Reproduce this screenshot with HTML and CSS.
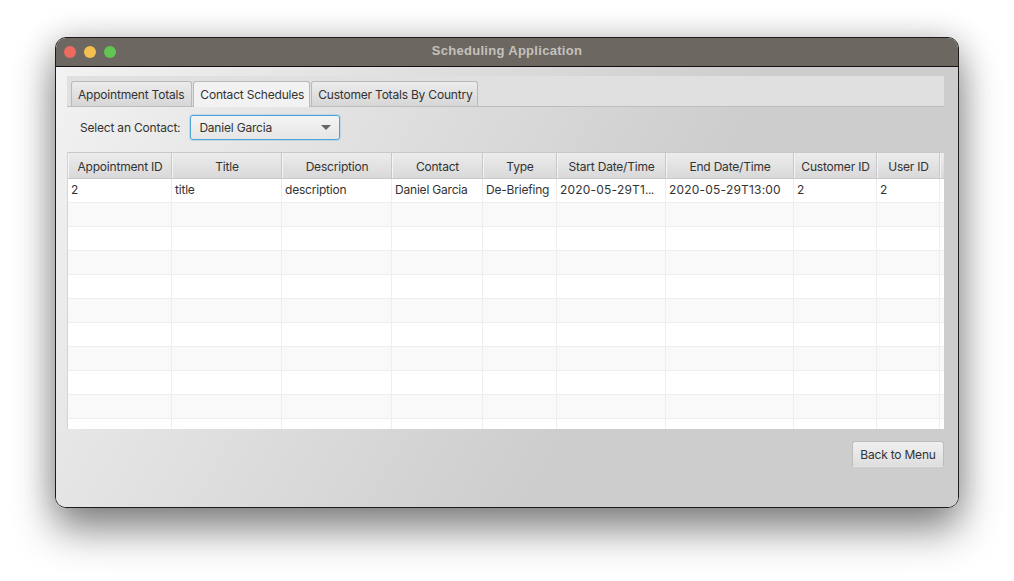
FILE: index.html
```html
<!DOCTYPE html>
<html>
<head>
  <title>Scheduling Application</title>
  <link rel="stylesheet" href="styles.css">
</head>
<body>

<div class="window">
  <div class="titlebar">
    <div class="lights">
      <span class="light red"></span>
      <span class="light yellow"></span>
      <span class="light green"></span>
    </div>
    <div class="window-title">Scheduling Application</div>
  </div>

  <div class="content">
    <div class="tabs">
      <div class="tab">Appointment Totals</div>
      <div class="tab active">Contact Schedules</div>
      <div class="tab">Customer Totals By Country</div>
    </div>

    <div class="filter">
      <label class="filter-label">Select an Contact:</label>
      <div class="select">
        <span>Daniel Garcia</span>
        <span class="arrow"></span>
      </div>
    </div>

    <div class="table">
      <div class="row head">
        <div class="cell">Appointment ID</div>
        <div class="cell">Title</div>
        <div class="cell">Description</div>
        <div class="cell">Contact</div>
        <div class="cell">Type</div>
        <div class="cell">Start Date/Time</div>
        <div class="cell">End Date/Time</div>
        <div class="cell">Customer ID</div>
        <div class="cell">User ID</div>
        <div class="cell"></div>
      </div>
      <div class="row">
        <div class="cell">2</div>
        <div class="cell">title</div>
        <div class="cell">description</div>
        <div class="cell">Daniel Garcia</div>
        <div class="cell">De-Briefing</div>
        <div class="cell date">2020-05-29T1<span class="dots">...</span></div>
        <div class="cell date">2020-05-29T13:00</div>
        <div class="cell">2</div>
        <div class="cell">2</div>
        <div class="cell"></div>
      </div>
      <div class="row"><div class="cell"></div><div class="cell"></div><div class="cell"></div><div class="cell"></div><div class="cell"></div><div class="cell"></div><div class="cell"></div><div class="cell"></div><div class="cell"></div><div class="cell"></div></div>
      <div class="row"><div class="cell"></div><div class="cell"></div><div class="cell"></div><div class="cell"></div><div class="cell"></div><div class="cell"></div><div class="cell"></div><div class="cell"></div><div class="cell"></div><div class="cell"></div></div>
      <div class="row"><div class="cell"></div><div class="cell"></div><div class="cell"></div><div class="cell"></div><div class="cell"></div><div class="cell"></div><div class="cell"></div><div class="cell"></div><div class="cell"></div><div class="cell"></div></div>
      <div class="row"><div class="cell"></div><div class="cell"></div><div class="cell"></div><div class="cell"></div><div class="cell"></div><div class="cell"></div><div class="cell"></div><div class="cell"></div><div class="cell"></div><div class="cell"></div></div>
      <div class="row"><div class="cell"></div><div class="cell"></div><div class="cell"></div><div class="cell"></div><div class="cell"></div><div class="cell"></div><div class="cell"></div><div class="cell"></div><div class="cell"></div><div class="cell"></div></div>
      <div class="row"><div class="cell"></div><div class="cell"></div><div class="cell"></div><div class="cell"></div><div class="cell"></div><div class="cell"></div><div class="cell"></div><div class="cell"></div><div class="cell"></div><div class="cell"></div></div>
      <div class="row"><div class="cell"></div><div class="cell"></div><div class="cell"></div><div class="cell"></div><div class="cell"></div><div class="cell"></div><div class="cell"></div><div class="cell"></div><div class="cell"></div><div class="cell"></div></div>
      <div class="row"><div class="cell"></div><div class="cell"></div><div class="cell"></div><div class="cell"></div><div class="cell"></div><div class="cell"></div><div class="cell"></div><div class="cell"></div><div class="cell"></div><div class="cell"></div></div>
      <div class="row"><div class="cell"></div><div class="cell"></div><div class="cell"></div><div class="cell"></div><div class="cell"></div><div class="cell"></div><div class="cell"></div><div class="cell"></div><div class="cell"></div><div class="cell"></div></div>
      <div class="row"><div class="cell"></div><div class="cell"></div><div class="cell"></div><div class="cell"></div><div class="cell"></div><div class="cell"></div><div class="cell"></div><div class="cell"></div><div class="cell"></div><div class="cell"></div></div>
    </div>

    <div class="actions">
      <button class="btn">Back to Menu</button>
    </div>
  </div>
</div>

</body>
</html>
```

FILE: styles.css
```css
html, body {
  height: 100%;
}
body {
  margin: 0;
  padding: 37px 0 0 55px;
  box-sizing: border-box;
  background: #fff;
  font-family: 'Inter', 'Liberation Sans', sans-serif;
  font-size: 12px;
  letter-spacing: -0.2px;
  color: #333;
  overflow: hidden;
}
.window {
  width: 904px;
  height: 471px;
  box-sizing: border-box;
  border: 1px solid #1c1c1c;
  border-radius: 11px;
  overflow: hidden;
  box-shadow: 0 22px 42px rgba(0, 0, 0, 0.46), 0 0 32px rgba(0, 0, 0, 0.18);
  display: flex;
  flex-direction: column;
}
.titlebar {
  height: 28px;
  flex-shrink: 0;
  background: #6c6761;
  border-bottom: 1px solid #111;
  display: flex;
  align-items: center;
  justify-content: center;
  position: relative;
}
.lights {
  position: absolute;
  left: 8px;
  top: 8px;
  display: flex;
  gap: 8px;
}
.light {
  width: 12px;
  height: 12px;
  border-radius: 50%;
}
.red { background: #ed6a5e; }
.yellow { background: #f4bf4f; }
.green { background: #61c554; }
.window-title {
  font-family: 'Liberation Sans', sans-serif;
  font-weight: bold;
  font-size: 13px;
  letter-spacing: 0.3px;
  color: #c4c1bd;
  margin: -4px 0 0 0;
}
.content {
  flex: 1;
  padding: 9px 14px 0 11px;
  background: linear-gradient(120deg, #f2f2f2 0%, #cdcdcd 62%);
  display: flex;
  flex-direction: column;
}
.tabs {
  height: 31px;
  box-sizing: border-box;
  background: #e0e0e0;
  border-bottom: 1px solid #bdbdbd;
  padding: 5px 0 0 4px;
  display: flex;
  gap: 1px;
}
.tab {
  height: 25px;
  box-sizing: border-box;
  padding: 0 6px;
  background: linear-gradient(#ececec, #d6d6d6);
  border: 1px solid #b9b9b9;
  border-bottom: none;
  border-radius: 3px 3px 0 0;
  line-height: 25px;
  white-space: nowrap;
}
.tab:first-child {
  padding-right: 7px;
}
.tab:last-child {
  padding-right: 5px;
}
.tab.active {
  background: #f2f2f2;
  height: 26px;
  padding-right: 5px;
}
.filter {
  height: 45px;
  box-sizing: border-box;
  display: flex;
  align-items: center;
  padding: 0 0 4px 13px;
  gap: 10px;
}
.select {
  width: 150px;
  height: 25px;
  box-sizing: border-box;
  border: 1px solid #4ba3d8;
  border-radius: 3px;
  background: linear-gradient(#f4f4f4, #e6e6e6);
  box-shadow: 0 0 0 1px rgba(120, 190, 235, 0.35);
  display: flex;
  align-items: center;
  justify-content: space-between;
  padding: 0 8px;
}
.arrow {
  width: 0;
  height: 0;
  border-left: 5px solid transparent;
  border-right: 5px solid transparent;
  border-top: 5px solid #666;
}
.table {
  height: 277px;
  overflow: hidden;
  background: #fff;
  border-top: 1px solid #c8c8c8;
  border-left: 1px solid #d4d4d4;
  box-sizing: border-box;
}
.row {
  display: grid;
  grid-template-columns: 104px 110px 110px 91px 74px 109px 128px 83px 63px 5px;
  height: 24px;
  background: #fff;
  box-sizing: border-box;
  border-bottom: 1px solid #eeeeee;
}
.row:nth-child(odd) {
  background: #f9f9f9;
}
.cell {
  border-right: 1px solid #eeeeee;
  box-sizing: border-box;
  padding: 0 3px;
  line-height: 22px;
  white-space: nowrap;
  overflow: hidden;
}
.date {
  letter-spacing: 0.2px;
}
.dots {
  letter-spacing: -0.6px;
}
.row.head {
  height: 26px;
  background: linear-gradient(#ececec, #d9d9d9);
  border-bottom: 1px solid #c8c8c8;
}
.head .cell {
  border-right: 1px solid #c8c8c8;
  text-align: center;
  line-height: 27px;
  border-left: 1px solid #f4f4f4;
}
.actions {
  display: flex;
  justify-content: flex-end;
  padding-top: 12px;
}
.btn {
  width: 92px;
  height: 26px;
  padding: 0;
  font: inherit;
  letter-spacing: inherit;
  color: #333;
  background: linear-gradient(#f0f0f0, #dedede);
  border: 1px solid #bdbdbd;
  border-bottom-color: #e4e4e4;
  border-radius: 3px;
}
```
